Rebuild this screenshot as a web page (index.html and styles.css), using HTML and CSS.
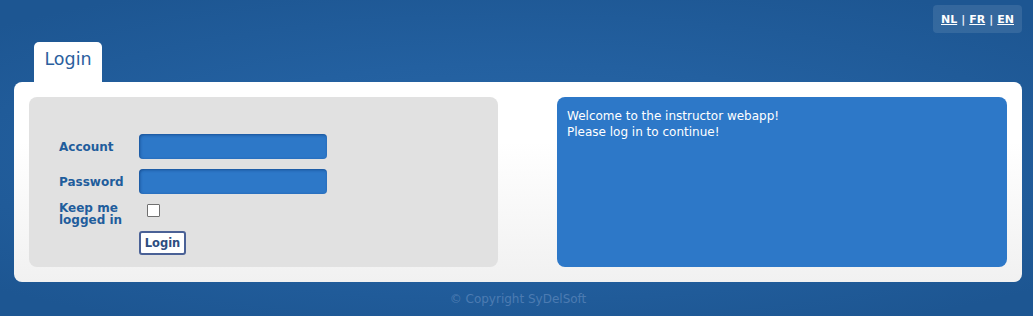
FILE: index.html
```html
<!DOCTYPE html>
<html>
<head>
<meta charset="utf-8">
<link rel="stylesheet" href="styles.css">
</head>
<body>
<div class="page">
  <div class="topbar">
    <div class="lang"><a href="#">NL</a> | <a href="#">FR</a> | <a href="#">EN</a></div>
  </div>
  <div class="tabs"><div class="tab">Login</div></div>
  <div class="panel">
    <div class="loginbox">
      <form class="form">
        <label class="lbl">Account</label>
        <input class="field" type="text">
        <label class="lbl">Password</label>
        <input class="field" type="password">
        <label class="lbl lbl-keep">Keep me<br>logged in</label>
        <div class="chkwrap"><span class="chk"></span></div>
        <div class="btnwrap"><button class="btn" type="button">Login</button></div>
      </form>
    </div>
    <div class="welcome">Welcome to the instructor webapp!<br>Please log in to continue!</div>
  </div>
  <div class="footer">© Copyright SyDelSoft</div>
</div>
</body>
</html>
```

FILE: styles.css
```css
html, body {
  margin: 0;
  padding: 0;
  height: 100%;
}
body {
  background: radial-gradient(ellipse 70% 60% at 50% 50%, #2a68a8 0%, #2360a0 50%, #1d5692 100%);
  font-family: "DejaVu Sans", Verdana, sans-serif;
  overflow: hidden;
}
.page {
  padding: 5px 11px 0 14px;
}
.topbar {
  display: flex;
  justify-content: flex-end;
}
.lang {
  height: 28px;
  width: 89px;
  box-sizing: border-box;
  display: flex;
  align-items: center;
  justify-content: center;
  gap: 4px;
  background: rgba(255, 255, 255, 0.1);
  border-radius: 4px;
  color: #e8eef6;
  font-size: 11px;
  font-weight: bold;
}
.lang a {
  color: #ffffff;
  text-decoration: underline;
}
.tabs {
  display: flex;
  padding-left: 20px;
  margin-top: 9px;
}
.tab {
  width: 68px;
  height: 40px;
  box-sizing: border-box;
  background: #ffffff;
  border-radius: 5px 5px 0 0;
  color: #2b609e;
  font-size: 17.5px;
  padding-top: 7px;
  text-align: center;
}
.panel {
  height: 200px;
  box-sizing: border-box;
  background: linear-gradient(#ffffff 0%, #ffffff 30%, #f1f1f1 100%);
  border-radius: 8px;
  padding: 15px 15px;
  display: flex;
  gap: 59px;
}
.loginbox {
  width: 469px;
  background: #e1e1e1;
  border-radius: 8px;
  padding: 37px 0 0 30px;
  box-sizing: border-box;
}
.form {
  display: grid;
  grid-template-columns: 80px 188px;
  grid-template-rows: 25px 25px 20px 24px;
  row-gap: 10px;
  margin: 0;
}
.lbl {
  color: #1f5d9c;
  font-weight: bold;
  font-size: 12px;
  align-self: center;
}
.lbl-keep {
  align-self: start;
  line-height: 12px;
  margin-top: -2px;
}
.field {
  width: 188px;
  height: 25px;
  box-sizing: border-box;
  border: none;
  border-radius: 4px;
  background: #2d78c8;
  box-shadow: inset 1px 1px 3px rgba(0, 40, 100, 0.5);
  outline: none;
  padding: 0;
}
.chkwrap {
  padding: 0 0 0 8px;
}
.chk {
  display: block;
  width: 13px;
  height: 13px;
  box-sizing: border-box;
  border: 1px solid #707070;
  background: #ffffff;
  border-radius: 1px;
}
.btnwrap {
  grid-column: 2;
  margin-top: -3px;
}
.btn {
  width: 47px;
  height: 24px;
  box-sizing: border-box;
  border: 2px solid #4a6196;
  border-radius: 3px;
  background: #ffffff;
  color: #2e4d80;
  font-family: "DejaVu Sans", Verdana, sans-serif;
  font-weight: bold;
  font-size: 11.5px;
  padding: 0;
}
.welcome {
  flex: 1;
  background: #2d78c8;
  border-radius: 8px;
  color: #ffffff;
  font-size: 12px;
  line-height: 16px;
  padding: 11px 10px;
}
.footer {
  text-align: center;
  color: #4c7bb2;
  font-size: 12px;
  margin-top: 10px;
}
```
